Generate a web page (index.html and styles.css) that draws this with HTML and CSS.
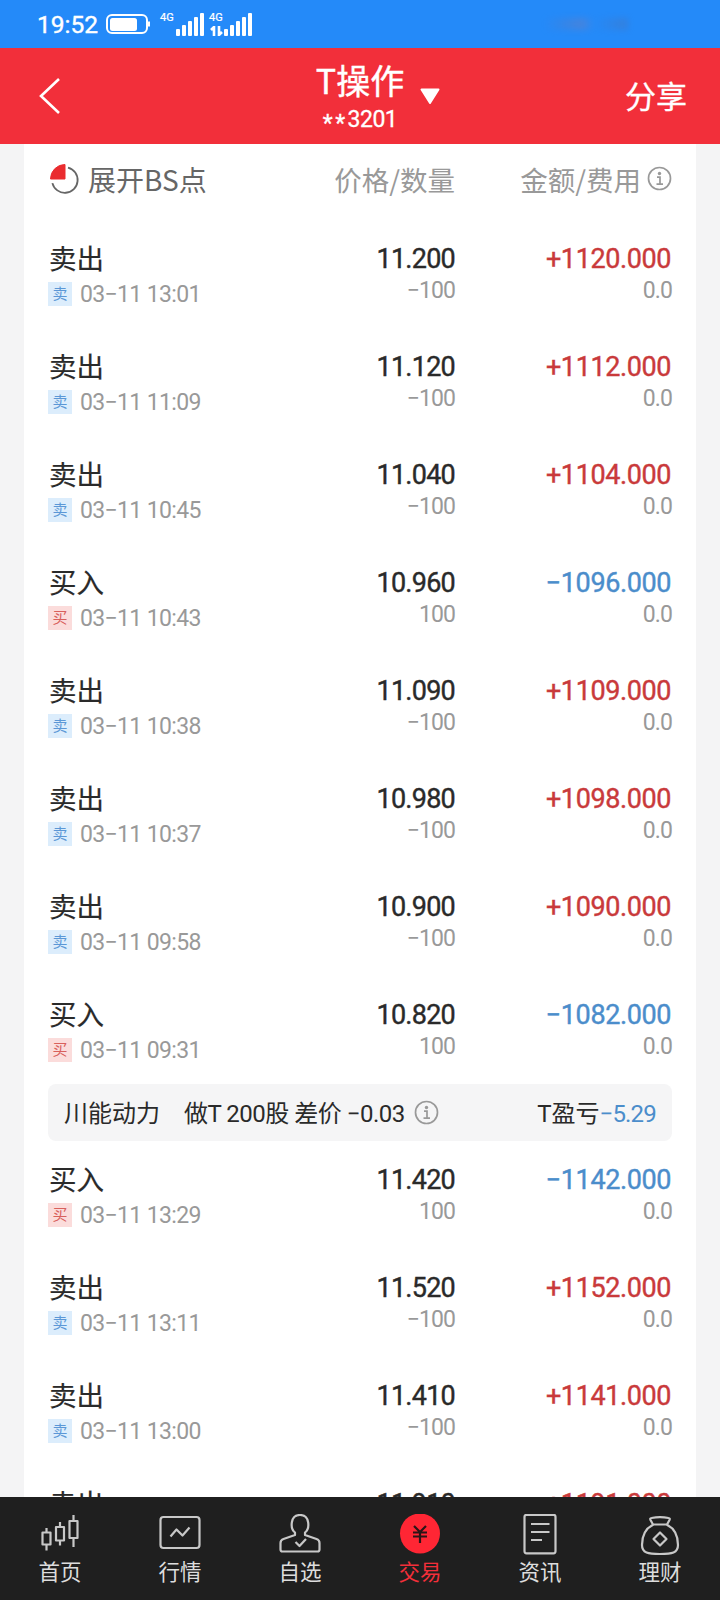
FILE: index.html
```html
<!DOCTYPE html>
<html lang="zh-CN">
<head>
    <meta charset="UTF-8" />
    <meta name="viewport" content="width=device-width, initial-scale=1.0"/>
    <title>T操作</title>
    <link rel="stylesheet" href="styles.css">
</head>
<body>
    <div class="status-bar">
        <span class="clock">19:52</span>
        <svg class="battery" width="44" height="20" viewBox="0 0 44 20"><rect x="1" y="1" width="40" height="18" rx="5" fill="none" stroke="#fff" stroke-width="2"/><rect x="4" y="4" width="27" height="13" rx="2.5" fill="#fff"/><path d="M42.5 7.5v5" stroke="#fff" stroke-width="3"/></svg>
        <div class="signal">
            <span class="net">4G</span>
            <svg class="bars" width="29" height="24" viewBox="0 0 29 24" fill="#fff"><rect x="0" y="16" width="4" height="7" rx="1"/><rect x="6" y="12" width="4" height="11" rx="1"/><rect x="12" y="8" width="4" height="15" rx="1"/><rect x="18" y="4" width="4" height="19" rx="1"/><rect x="24" y="0" width="4" height="23" rx="1"/></svg>
        </div>
        <div class="signal second">
            <div class="net-col">
                <span class="net">4G</span>
                <svg class="arrows" width="13" height="10" viewBox="0 0 13 10" fill="none" stroke="#fff" stroke-width="2.6"><path d="M1 4l3-3v9M12 6L9 9V0"/></svg>
            </div>
            <svg class="bars" width="29" height="24" viewBox="0 0 29 24" fill="#fff"><rect x="0" y="16" width="4" height="7" rx="1"/><rect x="6" y="12" width="4" height="11" rx="1"/><rect x="12" y="8" width="4" height="15" rx="1"/><rect x="18" y="4" width="4" height="19" rx="1"/><rect x="24" y="0" width="4" height="23" rx="1"/></svg>
        </div>
        <span class="smudge"></span>
    </div>

    <header>
        <svg class="back" width="22" height="38" viewBox="0 0 22 38"><path d="M20 2L2 19l18 17" fill="none" stroke="#fff" stroke-width="2.6"/></svg>
        <div class="title">
            <div class="title-text">
                <h1>T操作</h1>
                <p><span>**</span>3201</p>
            </div>
            <svg class="caret" width="20" height="17" viewBox="0 0 20 17"><path d="M1.5 1.5h17L10 15z" fill="#fff" stroke="#fff" stroke-width="2" stroke-linejoin="round"/></svg>
        </div>
        <span class="share">分享</span>
    </header>

    <main>
        <div class="list-head">
            <div class="col-name">
                <svg width="32" height="32" viewBox="0 0 32 32"><path d="M19 4.600a12.800 12.800 0 1 1-15.600 15.500" fill="none" stroke="#666" stroke-width="1.800"/><path d="M16 1.500V16H1.500A14.500 14.500 0 0 1 16 1.500z" fill="#ea2c2f" stroke="#ea2c2f" stroke-linejoin="round"/></svg>
                <span>展开BS点</span>
            </div>
            <div class="col-price">价格/数量</div>
            <div class="col-amount">金额/费用<svg class="info" width="25" height="25" viewBox="0 0 25 25"><circle cx="12.500" cy="12.500" r="11" fill="none" stroke="#999" stroke-width="1.700"/><circle cx="12.500" cy="7.500" r="1.700" fill="#999"/><path d="M10 11.200h3v7M9.500 18.200h6.500" fill="none" stroke="#999" stroke-width="1.700"/></svg></div>
        </div>

        <div class="row">
            <div class="col-name"><h3>卖出</h3><p><i class="sell">卖</i>03−11 13:01</p></div>
            <div class="col-price"><b>11.200</b><span>−100</span></div>
            <div class="col-amount up"><b>+1120.000</b><span>0.0</span></div>
        </div>
        <div class="row">
            <div class="col-name"><h3>卖出</h3><p><i class="sell">卖</i>03−11 11:09</p></div>
            <div class="col-price"><b>11.120</b><span>−100</span></div>
            <div class="col-amount up"><b>+1112.000</b><span>0.0</span></div>
        </div>
        <div class="row">
            <div class="col-name"><h3>卖出</h3><p><i class="sell">卖</i>03−11 10:45</p></div>
            <div class="col-price"><b>11.040</b><span>−100</span></div>
            <div class="col-amount up"><b>+1104.000</b><span>0.0</span></div>
        </div>
        <div class="row">
            <div class="col-name"><h3>买入</h3><p><i class="buy">买</i>03−11 10:43</p></div>
            <div class="col-price"><b>10.960</b><span>100</span></div>
            <div class="col-amount down"><b>−1096.000</b><span>0.0</span></div>
        </div>
        <div class="row">
            <div class="col-name"><h3>卖出</h3><p><i class="sell">卖</i>03−11 10:38</p></div>
            <div class="col-price"><b>11.090</b><span>−100</span></div>
            <div class="col-amount up"><b>+1109.000</b><span>0.0</span></div>
        </div>
        <div class="row">
            <div class="col-name"><h3>卖出</h3><p><i class="sell">卖</i>03−11 10:37</p></div>
            <div class="col-price"><b>10.980</b><span>−100</span></div>
            <div class="col-amount up"><b>+1098.000</b><span>0.0</span></div>
        </div>
        <div class="row">
            <div class="col-name"><h3>卖出</h3><p><i class="sell">卖</i>03−11 09:58</p></div>
            <div class="col-price"><b>10.900</b><span>−100</span></div>
            <div class="col-amount up"><b>+1090.000</b><span>0.0</span></div>
        </div>
        <div class="row">
            <div class="col-name"><h3>买入</h3><p><i class="buy">买</i>03−11 09:31</p></div>
            <div class="col-price"><b>10.820</b><span>100</span></div>
            <div class="col-amount down"><b>−1082.000</b><span>0.0</span></div>
        </div>

        <div class="summary">
            <span class="stock">川能动力</span>
            <span class="detail">做T 200股 差价 −0.03</span>
            <svg class="info" width="25" height="25" viewBox="0 0 25 25"><circle cx="12.500" cy="12.500" r="11" fill="none" stroke="#999" stroke-width="1.700"/><circle cx="12.500" cy="7.500" r="1.700" fill="#999"/><path d="M10 11.200h3v7M9.500 18.200h6.500" fill="none" stroke="#999" stroke-width="1.700"/></svg>
            <span class="profit">T盈亏<em>−5.29</em></span>
        </div>

        <div class="row">
            <div class="col-name"><h3>买入</h3><p><i class="buy">买</i>03−11 13:29</p></div>
            <div class="col-price"><b>11.420</b><span>100</span></div>
            <div class="col-amount down"><b>−1142.000</b><span>0.0</span></div>
        </div>
        <div class="row">
            <div class="col-name"><h3>卖出</h3><p><i class="sell">卖</i>03−11 13:11</p></div>
            <div class="col-price"><b>11.520</b><span>−100</span></div>
            <div class="col-amount up"><b>+1152.000</b><span>0.0</span></div>
        </div>
        <div class="row">
            <div class="col-name"><h3>卖出</h3><p><i class="sell">卖</i>03−11 13:00</p></div>
            <div class="col-price"><b>11.410</b><span>−100</span></div>
            <div class="col-amount up"><b>+1141.000</b><span>0.0</span></div>
        </div>
        <div class="row">
            <div class="col-name"><h3>卖出</h3></div>
            <div class="col-price"><b>11.910</b></div>
            <div class="col-amount up"><b>+1191.000</b></div>
        </div>
    </main>

    <nav>
        <a>
            <svg width="44" height="44" viewBox="0 0 44 44"><path d="M4.500 18.500h8v12h-8zM8.500 14v4.500M8.500 30.500v6M18 13h8v13.500h-8zM22 8v5M22 26.500v5M31.500 7h8v17h-8zM35.500 1v6M35.500 24v9"/></svg>
            <span>首页</span>
        </a>
        <a>
            <svg width="44" height="44" viewBox="0 0 44 44"><rect x="2.500" y="3" width="39" height="31" rx="3"/><path d="M12.500 22.500l6-7 6 6 7-8"/></svg>
            <span>行情</span>
        </a>
        <a>
            <svg width="44" height="44" viewBox="0 0 44 44"><path d="M17 18.500c-5-4-5-17.500 5-17.500s10 13.500 5 17.500v2.500l11.500 4q3 1 3 4v6.500q0 2-2 2h-35q-2 0-2-2v-6.500q0-3 3-4l11.500-4z"/><path d="M17.500 28l4 4 6.500-7"/></svg>
            <span>自选</span>
        </a>
        <a class="active">
            <svg width="44" height="44" viewBox="0 0 44 44"><circle cx="22" cy="19.500" r="20"/><path d="M16 12l6 6 6-6M15 18.500h14M15 22.500h14M22 18v11"/></svg>
            <span>交易</span>
        </a>
        <a>
            <svg width="44" height="44" viewBox="0 0 44 44"><rect x="6.500" y="0.800" width="31" height="38.500" rx="2"/><path d="M13 10h18.500M13 18h18.500M13 26h11"/></svg>
            <span>资讯</span>
        </a>
        <a>
            <svg width="44" height="44" viewBox="0 0 44 44"><path d="M15 10.500L12.500 6q-.8-1.800 1-2 8.500-1.800 17 0 1.800.2 1 2L29 10.500zM15.500 10.500Q4 16 4 31c0 8 6 9 18 9s18-1 18-9q0-15-11.500-20.500"/><path d="M22 18.500l6.500 6.500-6.500 6.500-6.500-6.500z"/></svg>
            <span>理财</span>
        </a>
    </nav>
</body>
</html>
```
FILE: styles.css
```css
* { box-sizing: border-box; }
body { margin: 0; height: 1600px; overflow: hidden; display: flex; flex-direction: column; font-family: Roboto, "Noto Sans CJK SC", sans-serif; background-color: #f4f4f5; color: #2a2a2a; }
h1, h3, p { margin: 0; font-weight: 400; }
svg { display: block; flex: none; }

.status-bar { height: 48px; flex: none; display: flex; align-items: center; padding-left: 37px; background-color: #248af9; color: #fff; }
.clock { font-size: 24.5px; line-height: 46px; width: 69px; padding-top: 2px; -webkit-text-stroke: 0.4px #fff; }
.signal { display: flex; margin-left: 10px; height: 24px; }
.signal.second { margin-left: 4px; }
.net { display: block; width: 16px; padding-top: 1px; font-size: 11px; line-height: 10px; -webkit-text-stroke: 0.2px #fff; }
.signal .bars { margin-top: 1px; }
.net-col { width: 15px; }
.arrows { margin-top: 3px; margin-left: 1px; }
.smudge { width: 84px; height: 12px; margin-left: 291px; filter: blur(3px); background: linear-gradient(90deg, transparent, #3f83de 25%, #5a80cc 45%, transparent 60%, #3c7bd0 95%); opacity: 0.6; }

header { height: 96px; flex: none; display: flex; justify-content: space-between; align-items: center; padding: 0 33px 0 39px; background-color: #f22f3a; color: #fff; }
.title { display: flex; align-items: center; margin-left: 70px; }
.title-text { text-align: center; }
.title h1 { font-size: 34px; line-height: 40px; font-family: "Noto Sans CJK SC", sans-serif; -webkit-text-stroke: 0.4px #fff; }
.title p { height: 32px; font-size: 23px; line-height: 28px; padding-top: 6px; letter-spacing: -0.5px; -webkit-text-stroke: 0.3px #fff; }
.title p span { letter-spacing: 2.5px; line-height: 1; vertical-align: -4px; }
.caret { margin-left: 16px; }
.share { font-size: 31px; padding-bottom: 4px; -webkit-text-stroke: 0.3px #fff; }

main { flex: 1; min-height: 0; overflow: hidden; margin: 0 24px; padding: 0 24px; background-color: #fff; }
.list-head { display: flex; align-items: center; height: 76px; padding-bottom: 7px; font-family: "Noto Sans CJK SC", sans-serif; font-size: 27.5px; color: #999; }
.list-head .col-name { display: flex; align-items: center; gap: 8px; color: #666; }
.list-head .col-name span { font-size: 28px; }
.list-head .col-amount { display: flex; align-items: center; justify-content: flex-end; }
.list-head .info { margin-left: 6px; }
.list-head .col-name svg { margin-left: 1px; margin-right: -1px; }
.col-name { width: 208px; }
.col-price { width: 199px; text-align: right; }
.col-amount { flex: 1; text-align: right; }

.row { display: flex; height: 108px; padding-top: 22px; }
.row h3 { padding-left: 1px; font-size: 27.5px; line-height: 36px; -webkit-text-stroke: 0.2px #2a2a2a; }
.row p { display: flex; align-items: center; height: 32px; font-size: 23px; letter-spacing: -0.65px; color: #999; }
.row i { width: 24px; height: 24px; margin-right: 8px; font-size: 15px; line-height: 24px; font-style: normal; text-align: center; letter-spacing: 0; }
.sell { background-color: #dcedfc; color: #5b97d6; }
.buy { background-color: #fbdcdb; color: #d8605c; }
.row b { display: block; padding-top: 1px; font-size: 27px; line-height: 32px; font-weight: 400; letter-spacing: -0.75px; -webkit-text-stroke: 0.4px currentColor; }
.row .col-amount b { padding-right: 1px; letter-spacing: -0.4px; }
.row span { display: block; font-size: 23px; line-height: 32px; letter-spacing: -0.9px; color: #999; }
.up b { color: #c93a3b; }
.down b { color: #4b8dcb; }

.summary { display: flex; align-items: center; height: 57px; padding: 0 16px 3px; border-radius: 8px; background-color: #f5f5f6; font-size: 24px; }
.stock { margin-right: 24px; }
.detail { letter-spacing: -0.5px; }
.summary .info { margin-left: 9px; margin-top: 2px; }
.profit { margin-left: auto; }
.profit em { font-style: normal; color: #4b8dcb; letter-spacing: -0.8px; }

nav { height: 103px; flex: none; display: flex; background-color: #1f1f1f; color: #ddd; }
nav a { flex: 1; display: flex; flex-direction: column; align-items: center; padding-top: 17px; font-size: 21.5px; line-height: 30px; }
nav svg { fill: none; stroke: #c8c8c8; stroke-width: 2.2; stroke-linejoin: round; }
nav .active { color: #f22f3a; }
.active circle { fill: #ff2634; stroke: none; }
.active path { stroke: #2a1517; }
```
